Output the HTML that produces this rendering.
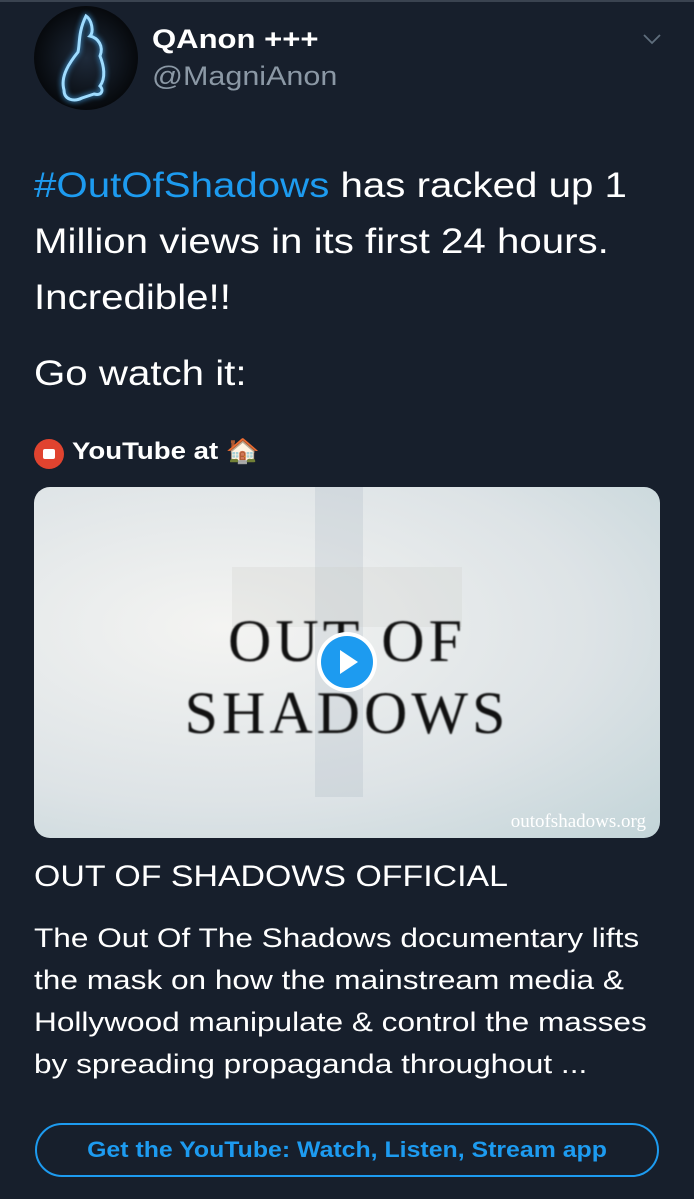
<!DOCTYPE html>
<html><head><meta charset="utf-8"><style>
body{margin:0;width:694px;height:1199px;background:#171f2c;font-family:"Liberation Sans",sans-serif;color:#fff;position:relative;overflow:hidden}
.a{position:absolute}
.s{transform-origin:0 0;white-space:nowrap}
</style></head><body>
<div class="a" style="left:0;top:0;width:694px;height:2px;background:#3a4350"></div>
<div class="a" style="left:34px;top:6px;width:104px;height:104px;border-radius:50%;background:radial-gradient(circle at 50% 50%,#1e2a3a,#05070a 75%);overflow:hidden">
<svg width="104" height="104" viewBox="0 0 104 104"><path d="M52 10 C58 14 60 26 56 30 C64 32 70 40 66 50 C70 60 72 72 66 80 C70 84 68 90 60 88 L48 92 C40 96 30 94 30 84 C26 70 36 56 44 46 C46 38 44 26 52 10Z" fill="none" stroke="#9fdcff" stroke-width="3" style="filter:drop-shadow(0 0 3px #4ab4ff)"/></svg></div>
<div class="a s" style="left:152px;top:24px;font-size:27px;font-weight:bold;transform:scaleX(1.15)">QAnon +++</div>
<div class="a s" style="left:152px;top:61px;font-size:27px;color:#8b98a5;transform:scaleX(1.13)">@MagniAnon</div>
<svg class="a" style="left:642px;top:32px" width="20" height="14" viewBox="0 0 20 14"><path d="M2 3 L10 11 L18 3" fill="none" stroke="#5f6e7d" stroke-width="1.8"/></svg>
<div class="a s" style="left:34px;top:158px;font-size:35px;line-height:56px;transform:scaleX(1.15)">
<span style="color:#1d9bf0">#OutOfShadows</span> has racked up 1<br>Million views in its first 24 hours.<br>Incredible!!</div>
<div class="a s" style="left:34px;top:346px;font-size:35px;line-height:56px;transform:scaleX(1.15)">Go watch it:</div>
<div class="a" style="left:34px;top:439px;width:30px;height:30px;border-radius:50%;background:#e0432f"><div class="a" style="left:9px;top:10px;width:12px;height:10px;background:#fff;border-radius:2px"></div></div>
<div class="a s" style="left:72px;top:437px;font-size:24px;font-weight:bold;line-height:30px;transform:scaleX(1.15)">YouTube at 🏠</div>
<div class="a" style="left:34px;top:487px;width:626px;height:351px;border-radius:16px;overflow:hidden;background:radial-gradient(ellipse at 30% 40%,#f4f4f2,#dde3e6 60%,#c2d4d8)">
<div class="a" style="left:281px;top:0;width:48px;height:310px;background:rgba(160,175,185,.22)"></div>
<div class="a" style="left:198px;top:80px;width:230px;height:60px;background:rgba(200,200,195,.22)"></div>
<div class="a" style="left:0;top:118px;width:626px;text-align:center;font-family:'Liberation Serif',serif;font-size:60px;line-height:72px;letter-spacing:4px;color:#111;filter:blur(.7px)">OUT OF<br>SHADOWS</div>
<div class="a" style="left:283px;top:145px;width:60px;height:60px;border-radius:50%;background:#fff"><div class="a" style="left:4px;top:4px;width:52px;height:52px;border-radius:50%;background:#1d9bf0"></div><svg class="a" style="left:21px;top:18px" width="24" height="24"><path d="M2 0 L20 12 L2 24Z" fill="#fff"/></svg></div>
<div class="a" style="right:14px;top:324px;font-family:'Liberation Serif',serif;font-size:19px;color:#fff">outofshadows.org</div>
</div>
<div class="a s" style="left:34px;top:860px;font-size:30px;transform:scaleX(1.13)">OUT OF SHADOWS OFFICIAL</div>
<div class="a s" style="left:34px;top:917px;font-size:27px;line-height:42px;transform:scaleX(1.17)">The Out Of The Shadows documentary lifts<br>the mask on how the mainstream media &amp;<br>Hollywood manipulate &amp; control the masses<br>by spreading propaganda throughout ...</div>
<div class="a" style="left:35px;top:1123px;width:620px;height:50px;border:2px solid #1d9bf0;border-radius:28px;text-align:center;line-height:50px;font-size:22px;font-weight:bold;color:#1d9bf0"><span style="display:inline-block;transform:scaleX(1.13)">Get the YouTube: Watch, Listen, Stream app</span></div>
</body></html>
